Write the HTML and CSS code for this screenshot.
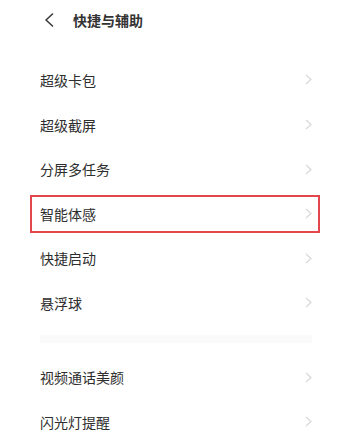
FILE: index.html
```html
<!DOCTYPE html>
<html lang="zh-CN">
<head>
<meta charset="utf-8">
<title>快捷与辅助</title>
<link rel="stylesheet" href="styles.css">
</head>
<body>
<div class="page">
  <header class="header">
    <svg class="back" width="10" height="14" viewBox="0 0 10 14"><polyline points="8.5,1 2,7 8.5,13" fill="none" stroke="#3a3a3a" stroke-width="1.6" stroke-linecap="round" stroke-linejoin="round"/></svg>
    <h1 class="title">快捷与辅助</h1>
  </header>
  <ul class="list">
    <li class="row"><span class="label">超级卡包</span><svg class="chev" width="7" height="11" viewBox="0 0 7 11"><polyline points="1,1 6,5.5 1,10" fill="none" stroke="#d8d8d8" stroke-width="1.2"/></svg></li>
    <li class="row"><span class="label">超级截屏</span><svg class="chev" width="7" height="11" viewBox="0 0 7 11"><polyline points="1,1 6,5.5 1,10" fill="none" stroke="#d8d8d8" stroke-width="1.2"/></svg></li>
    <li class="row"><span class="label">分屏多任务</span><svg class="chev" width="7" height="11" viewBox="0 0 7 11"><polyline points="1,1 6,5.5 1,10" fill="none" stroke="#d8d8d8" stroke-width="1.2"/></svg></li>
    <li class="row highlighted"><span class="label">智能体感</span><svg class="chev" width="7" height="11" viewBox="0 0 7 11"><polyline points="1,1 6,5.5 1,10" fill="none" stroke="#d8d8d8" stroke-width="1.2"/></svg></li>
    <li class="row"><span class="label">快捷启动</span><svg class="chev" width="7" height="11" viewBox="0 0 7 11"><polyline points="1,1 6,5.5 1,10" fill="none" stroke="#d8d8d8" stroke-width="1.2"/></svg></li>
    <li class="row"><span class="label">悬浮球</span><svg class="chev" width="7" height="11" viewBox="0 0 7 11"><polyline points="1,1 6,5.5 1,10" fill="none" stroke="#d8d8d8" stroke-width="1.2"/></svg></li>
  </ul>
  <div class="divider"></div>
  <ul class="list list-second">
    <li class="row"><span class="label">视频通话美颜</span><svg class="chev" width="7" height="11" viewBox="0 0 7 11"><polyline points="1,1 6,5.5 1,10" fill="none" stroke="#d8d8d8" stroke-width="1.2"/></svg></li>
    <li class="row"><span class="label">闪光灯提醒</span><svg class="chev" width="7" height="11" viewBox="0 0 7 11"><polyline points="1,1 6,5.5 1,10" fill="none" stroke="#d8d8d8" stroke-width="1.2"/></svg></li>
  </ul>
</div>
</body>
</html>
```

FILE: styles.css
```css
html, body {
  margin: 0;
  padding: 0;
  background: #ffffff;
}
body {
  font-family: "Noto Sans CJK SC", "Noto Sans", sans-serif;
  color: #333333;
  overflow: hidden;
}
.page {
  width: 355px;
}
.header {
  height: 40px;
  display: flex;
  align-items: center;
  padding-left: 44px;
  gap: 19px;
}
.back {
  display: block;
}
.title {
  margin: 0;
  font-size: 14px;
  font-weight: 700;
  color: #333333;
  line-height: 1;
}
.list {
  list-style: none;
  margin: 17.7px 0 0;
  padding: 0 43px 0 40px;
}
.row {
  position: relative;
  height: 44.6px;
  display: flex;
  align-items: center;
  justify-content: space-between;
}
.label {
  font-size: 14px;
  line-height: 1;
  color: #2e2e2e;
}
.chev {
  display: block;
}
.highlighted::after {
  content: "";
  position: absolute;
  top: 3.5px;
  bottom: 3px;
  left: -10px;
  right: -8px;
  border: 2px solid #e4474b;
  pointer-events: none;
}
.divider {
  margin: 9.5px 43px 0 40px;
  height: 8px;
  background: #fafafa;
}
.list-second {
  margin-top: 12px;
}
```
